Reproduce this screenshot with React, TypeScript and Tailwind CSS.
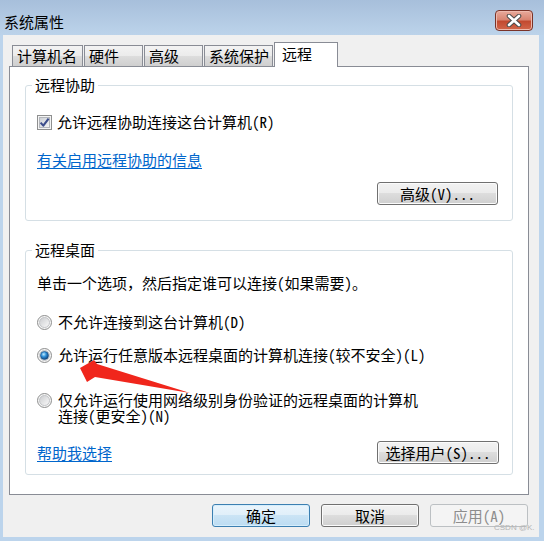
import React from "react";

const FONT = "font-['Noto_Sans_Mono_CJK_SC','Noto_Sans_CJK_SC',sans-serif]";

function Btn({
  children,
  w,
  kind = "normal",
}: {
  children: React.ReactNode;
  w: string;
  kind?: "normal" | "default" | "disabled";
}) {
  const base =
    "flex items-center justify-center h-[23px] rounded-[3px] border text-[15px] leading-[16px] " + w;
  if (kind === "default")
    return (
      <div
        className={
          base +
          " border-[#3c7fb1] text-black shadow-[inset_0_0_0_1px_#d6eefc] bg-[linear-gradient(#eaf4fc_0%,#e0eff9_50%,#cbe4f5_50%,#bcdcf2_100%)]"
        }
      >
        {children}
      </div>
    );
  if (kind === "disabled")
    return (
      <div className={base + " border-[#bcc0c3] text-[#8d8d8d] bg-[#f4f4f4]"}>{children}</div>
    );
  return (
    <div
      className={
        base +
        " border-[#707070] text-black shadow-[inset_0_0_0_1px_#fbfbfb] bg-[linear-gradient(#f2f2f2_0%,#ebebeb_50%,#dddddd_50%,#cfcfcf_100%)]"
      }
    >
      {children}
    </div>
  );
}

function Checkbox() {
  return (
    <svg width="15" height="15" viewBox="0 0 15 15" className="shrink-0">
      <defs>
        <linearGradient id="cbg" x1="0" y1="0" x2="1" y2="1">
          <stop offset="0" stopColor="#cbcfd5" />
          <stop offset="1" stopColor="#f6f6f6" />
        </linearGradient>
      </defs>
      <rect x="0.5" y="0.5" width="14" height="14" fill="#f4f4f4" stroke="#8e8f8f" />
      <rect x="2.5" y="2.5" width="10" height="10" fill="url(#cbg)" stroke="#b4b7bc" />
      <path d="M3.6 7.6 L6.3 10.6 L11.6 3.6" fill="none" stroke="#3d4e8c" strokeWidth="2.1" strokeLinejoin="round" />
    </svg>
  );
}

function Radio({ checked = false }: { checked?: boolean }) {
  return (
    <svg width="15" height="15" viewBox="0 0 15 15" className="shrink-0">
      <defs>
        <linearGradient id="rbg" x1="0" y1="0" x2="1" y2="1">
          <stop offset="0" stopColor="#c9cbce" />
          <stop offset="1" stopColor="#fbfbfb" />
        </linearGradient>
        <radialGradient id="rdot" cx="0.4" cy="0.35" r="0.7">
          <stop offset="0" stopColor="#bfeaff" />
          <stop offset="0.45" stopColor="#2e8fd8" />
          <stop offset="1" stopColor="#0c3b72" />
        </radialGradient>
      </defs>
      <circle cx="7.5" cy="7.5" r="7" fill="#f4f4f4" stroke="#8e8f8f" />
      <circle cx="7.5" cy="7.5" r="5" fill="url(#rbg)" stroke="#c3c5c8" />
      {checked && <circle cx="7.5" cy="7.5" r="4" fill="url(#rdot)" stroke="#1b4f84" strokeWidth="0.6" />}
    </svg>
  );
}

function Tab({
  label,
  w,
  selected = false,
}: {
  label: string;
  w: string;
  selected?: boolean;
}) {
  if (selected)
    return (
      <div
        className={
          "relative z-10 h-[25px] mb-[-1px] bg-white border border-b-0 border-[#898c95] pl-[7px] pt-[3px] text-[15px] leading-[16px] text-black " +
          w
        }
      >
        {label}
      </div>
    );
  return (
    <div
      className={
        "h-[21px] mr-[1px] border border-b-0 border-[#898c95] pl-[4px] pt-[2px] text-[15px] leading-[16px] text-black bg-[linear-gradient(#f3f3f3_0%,#ebebeb_50%,#dddddd_50%,#cfcfcf_100%)] " +
        w
      }
    >
      {label}
    </div>
  );
}

export default function App() {
  return (
    <div className={"relative w-[544px] h-[541px] flex flex-col bg-[#bcd4ec] overflow-hidden " + FONT}>
      {/* Title bar */}
      <div className="h-[35px] flex items-start justify-between bg-[linear-gradient(#a7bfdb,#bcd3ea)]">
        <div className="pl-[4px] pt-[14px] text-[15px] leading-[16px] text-black">系统属性</div>
        <div className="mt-[10px] mr-[11px] w-[38px] h-[21px] rounded-[4px] border border-[#7a3328] flex items-center justify-center bg-[linear-gradient(#e8aa9c_0%,#d98572_45%,#c24a30_55%,#d2664a_100%)] shadow-[inset_0_0_0_1px_#eeb9ad]">
          <svg width="16" height="13" viewBox="0 0 16 13">
            <path d="M3 2 L13 11 M13 2 L3 11" stroke="#4a4a4a" strokeWidth="4.6" strokeLinecap="round" />
            <path d="M3 2 L13 11 M13 2 L3 11" stroke="#ffffff" strokeWidth="2.6" strokeLinecap="round" />
          </svg>
        </div>
      </div>

      {/* Client area */}
      <div className="ml-[3px] mr-[5px] h-[502px] bg-[#f0f0f0] pt-[7px] flex flex-col">
        {/* Tabs */}
        <div className="flex items-end pl-[9px]">
          <Tab label="计算机名" w="w-[71px]" />
          <Tab label="硬件" w="w-[59px]" />
          <Tab label="高级" w="w-[59px]" />
          <Tab label="系统保护" w="w-[69px]" />
          <Tab label="远程" w="w-[64px]" selected />
        </div>

        {/* Panel */}
        <div className="ml-[6px] w-[520px] h-[429px] border border-[#898c95] bg-white flex flex-col text-[15px] leading-[16px] text-black">
          {/* Group 1 */}
          <fieldset className="mt-[10px] ml-[15px] w-[488px] border border-[#d5dfe5] rounded-[3px] p-0 m-0">
            <legend className="ml-[6px] px-[3px] text-[15px] leading-[16px]">远程协助</legend>
            <div className="pl-[11px] pr-[14px] pb-[15px] flex flex-col">
              <div className="mt-[21px] h-[16px] flex items-center gap-[5px]">
                <Checkbox />
                <span>允许远程协助连接这台计算机(R)</span>
              </div>
              <div className="mt-[22px] h-[16px]">
                <span className="text-[#0066cc] underline underline-offset-2">有关启用远程协助的信息</span>
              </div>
              <div className="mt-[14px] flex justify-end">
                <Btn w="w-[121px]">高级(V)...</Btn>
              </div>
            </div>
          </fieldset>

          {/* Group 2 */}
          <fieldset className="mt-[21px] ml-[15px] w-[488px] border border-[#d5dfe5] rounded-[3px] p-0 m-0">
            <legend className="ml-[6px] px-[3px] text-[15px] leading-[16px]">远程桌面</legend>
            <div className="pl-[11px] pr-[13px] pb-[10px] flex flex-col">
              <div className="mt-[17px] h-[16px]">单击一个选项，然后指定谁可以连接(如果需要)。</div>
              <div className="mt-[23px] h-[16px] flex items-center gap-[6px]">
                <Radio />
                <span>不允许连接到这台计算机(D)</span>
              </div>
              <div className="mt-[17px] h-[16px] flex items-center gap-[6px]">
                <Radio checked />
                <span>允许运行任意版本远程桌面的计算机连接(较不安全)(L)</span>
              </div>
              <div className="mt-[29px] flex items-start gap-[6px]">
                <div className="h-[16px] flex items-center">
                  <Radio />
                </div>
                <div>
                  仅允许运行使用网络级别身份验证的远程桌面的计算机
                  <br />
                  连接(更安全)(N)
                </div>
              </div>
              <div className="mt-[17px] flex items-center justify-between">
                <span className="text-[#0066cc] underline underline-offset-2">帮助我选择</span>
                <Btn w="w-[122px]">选择用户(S)...</Btn>
              </div>
            </div>
          </fieldset>
        </div>

        {/* Dialog buttons */}
        <div className="mt-[9px] flex justify-end gap-[11px] pr-[11px]">
          <Btn w="w-[98px]" kind="default">确定</Btn>
          <Btn w="w-[98px]">取消</Btn>
          <Btn w="w-[98px]" kind="disabled">应用(A)</Btn>
        </div>
      </div>

      {/* Red annotation arrow (overlay) */}
      <svg className="absolute left-0 top-0 pointer-events-none" width="544" height="541" viewBox="0 0 544 541">
        <polygon points="80,368 94,360 97,364 190,393 95,377 87,382" fill="#f0261c" />
      </svg>

      {/* Watermark */}
      <div className="absolute left-[494px] top-[523px] text-[8px] leading-[9px] text-[#b4b4b4] font-['Liberation_Sans',sans-serif]">
        CSDN @K.
      </div>
    </div>
  );
}
